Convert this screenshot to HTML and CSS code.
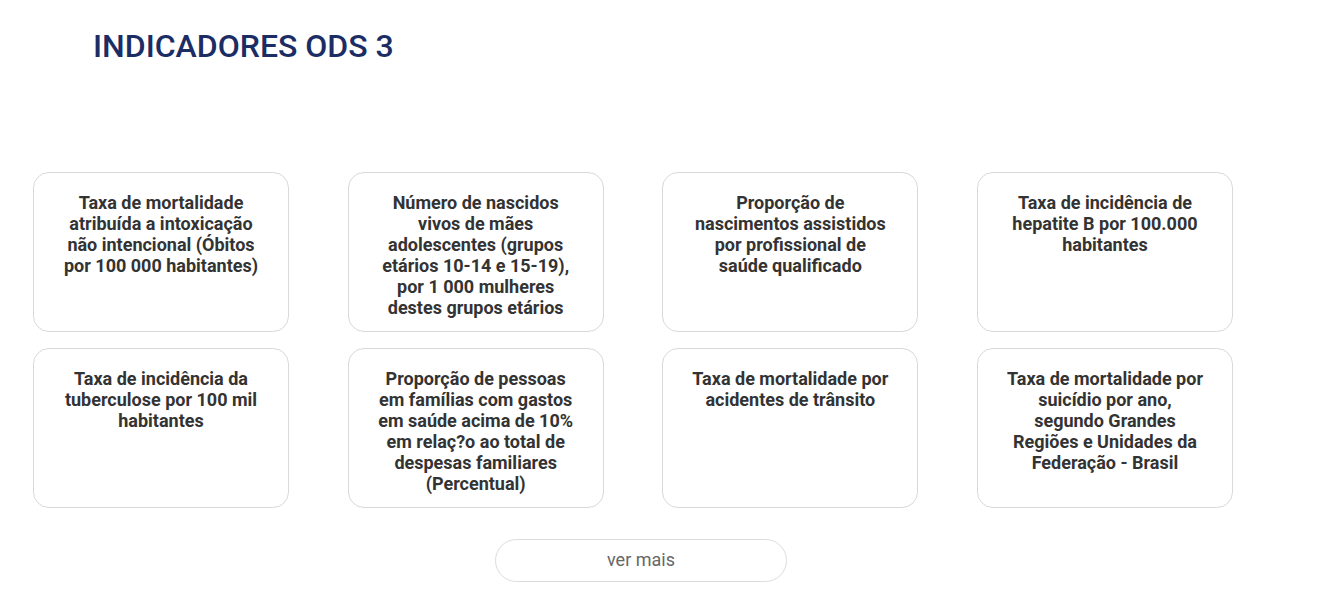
FILE: index.html
```html
<!DOCTYPE html>
<html lang="pt-BR">
<head>
<meta charset="utf-8">
<title>Indicadores ODS 3</title>
<link rel="stylesheet" href="styles.css">
</head>
<body>
<main class="page">
  <h1 class="title">INDICADORES ODS 3</h1>
  <section class="grid">
    <a class="card">Taxa de mortalidade atribuída a intoxicação não intencional (Óbitos por 100 000 habitantes)</a>
    <a class="card">Número de nascidos vivos de mães adolescentes (grupos etários 10-14 e 15-19), por 1 000 mulheres destes grupos etários</a>
    <a class="card">Proporção de nascimentos assistidos por profissional de saúde qualificado</a>
    <a class="card">Taxa de incidência de hepatite B por 100.000 habitantes</a>
    <a class="card">Taxa de incidência da tuberculose por 100 mil habitantes</a>
    <a class="card">Proporção de pessoas em famílias com gastos em saúde acima de 10% em relaç?o ao total de despesas familiares (Percentual)</a>
    <a class="card">Taxa de mortalidade por acidentes de trânsito</a>
    <a class="card">Taxa de mortalidade por suicídio por ano, segundo Grandes Regiões e Unidades da Federação - Brasil</a>
  </section>
  <div class="more-row">
    <button class="more">ver mais</button>
  </div>
</main>
</body>
</html>
```
FILE: styles.css
```css
* { box-sizing: border-box; }
html, body { margin: 0; padding: 0; background: #fff; }
body { font-family: Roboto, "Noto Sans", Arial, sans-serif; }
.page { width: 1324px; }
.title {
  margin: 0;
  padding: 27px 0 0 93px;
  font-size: 32px;
  font-weight: 500;
  line-height: 38px;
  color: #1b2d64;
  letter-spacing: 0;
}
.grid {
  margin-top: 107px;
  padding-left: 33px;
  display: grid;
  grid-template-columns: repeat(4, 256px);
  column-gap: 58.67px;
  row-gap: 16px;
}
.card {
  display: block;
  height: 160px;
  border: 1px solid #d9d9d9;
  border-radius: 16px;
  padding: 19px 28px 0;
  text-align: center;
  font-size: 18px;
  font-weight: 700;
  line-height: 21px;
  color: #333;
  text-decoration: none;
}
.more-row {
  margin-top: 31px;
  padding-left: 495px;
}
.more {
  display: block;
  width: 292px;
  height: 43px;
  border: 1px solid #dcdcdc;
  border-radius: 22px;
  background: #fff;
  font-family: Roboto, "Noto Sans", Arial, sans-serif;
  font-size: 18px;
  color: #666;
  padding: 0 0 2px;
}
```
